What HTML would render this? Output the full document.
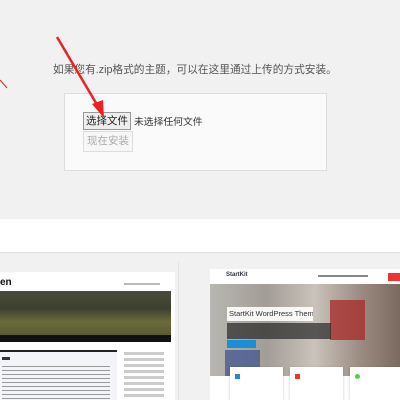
<!DOCTYPE html>
<html><head><meta charset="utf-8"><style>
*{margin:0;padding:0;box-sizing:border-box}
body{width:400px;height:400px;overflow:hidden;background:#f1f1f1;position:relative;font-family:"Liberation Sans","Noto Sans CJK SC",sans-serif}
.a{position:absolute}
</style></head><body>
<div class="a" style="left:53px;top:62px;font-size:10.7px;color:#555;white-space:nowrap">如果您有.zip格式的主题，可以在这里通过上传的方式安装。</div>
<div class="a" style="left:64px;top:93px;width:263px;height:78px;background:#fafafa;border:1px solid #ddd"></div>
<div class="a" style="left:83px;top:112px;width:48px;height:18px;background:#eee;border:1px solid #999;font-size:10.5px;line-height:16px;text-align:center;color:#222">选择文件</div>
<div class="a" style="left:134px;top:114px;font-size:9.8px;color:#333">未选择任何文件</div>
<div class="a" style="left:83px;top:131px;width:50px;height:21px;background:#f7f7f7;border:1px solid #ddd;font-size:10.5px;line-height:19px;text-align:center;color:#aaa">现在安装</div>
<svg class="a" style="left:0;top:0" width="400" height="220">
<line x1="57" y1="37" x2="99" y2="108" stroke="#f02020" stroke-width="2.5"/>
<polygon points="104,118 92,104 103,100" fill="#f02020"/>
<line x1="0" y1="80" x2="7" y2="88" stroke="#f02020" stroke-width="1"/>
</svg>
<div class="a" style="left:0;top:219px;width:400px;height:34px;background:#fff;border-bottom:1px solid #ddd"></div>
<div class="a" style="left:0;top:272px;width:175px;height:128px;background:#fff"></div>
<div class="a" style="left:0;top:277px;font-size:10px;font-weight:bold;color:#111">en</div>
<div class="a" style="left:124px;top:283px;width:36px;height:2px;background:#bbb"></div>
<div class="a" style="left:0;top:291px;width:171px;height:44px;background:linear-gradient(180deg,#4a4b3a 0%,#3d4030 40%,#6a6d3a 70%,#5a5a30 100%)"></div>
<div class="a" style="left:0;top:335px;width:171px;height:7px;background:#111"></div>
<div class="a" style="left:0;top:350px;width:117px;height:50px;background:#f2f4f9;border-top:2px solid #222"></div>
<div class="a" style="left:2px;top:357px;width:8px;height:3px;background:#333"></div>
<div class="a" style="left:2px;top:366px;width:108px;height:34px;background:repeating-linear-gradient(180deg,#999 0 1px,transparent 1px 4px)"></div>
<div class="a" style="left:124px;top:352px;width:40px;height:48px;background:repeating-linear-gradient(180deg,#ccc 0 3px,#fff 3px 6px)"></div>
<div class="a" style="left:178px;top:262px;width:1px;height:138px;background:#e2e2e2"></div>
<div class="a" style="left:210px;top:269px;width:190px;height:131px;background:#fff"></div>
<div class="a" style="left:226px;top:272px;font-size:6px;font-weight:bold;color:#334">StartKit</div>
<div class="a" style="left:388px;top:273px;width:12px;height:8px;background:#e33"></div>
<div class="a" style="left:318px;top:275px;width:50px;height:2px;background:#888"></div>
<div class="a" style="left:210px;top:284px;width:190px;height:92px;background:linear-gradient(90deg,#b8b6b0 0%,#a29d96 30%,#c9c3bb 55%,#9a8a80 80%,#7a6a60 100%)"></div>
<div class="a" style="left:330px;top:300px;width:35px;height:40px;background:#a83030;opacity:.8"></div>
<div class="a" style="left:225px;top:350px;width:35px;height:26px;background:#4a5a90;opacity:.8"></div>
<div class="a" style="left:227px;top:307px;width:86px;height:14px;background:rgba(255,255,255,.9);font-size:7.5px;line-height:14px;padding-left:2px;color:#333;white-space:nowrap;overflow:hidden">StartKit WordPress Theme</div>
<div class="a" style="left:227px;top:323px;width:104px;height:16px;background:rgba(40,40,40,.7)"></div>
<div class="a" style="left:227px;top:340px;width:29px;height:8px;background:#1a8fd8"></div>
<div class="a" style="left:230px;top:367px;width:53px;height:33px;background:#fff;box-shadow:0 1px 3px rgba(0,0,0,.2)"></div>
<div class="a" style="left:290px;top:367px;width:53px;height:33px;background:#fff;box-shadow:0 1px 3px rgba(0,0,0,.2)"></div>
<div class="a" style="left:350px;top:367px;width:50px;height:33px;background:#fff;box-shadow:0 1px 3px rgba(0,0,0,.2)"></div>
<div class="a" style="left:235px;top:374px;width:5px;height:5px;background:#1a8fd8"></div>
<div class="a" style="left:295px;top:374px;width:5px;height:5px;background:#e33"></div>
<div class="a" style="left:355px;top:374px;width:5px;height:5px;background:#5c5;border-radius:50%"></div>
</body></html>
